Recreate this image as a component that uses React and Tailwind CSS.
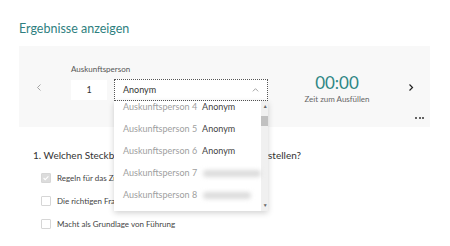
import React from 'react';

const font = { fontFamily: 'Lato, "Open Sans", sans-serif' };

const rows = [
    { n: 4, name: 'Anonym' },
    { n: 5, name: 'Anonym' },
    { n: 6, name: 'Anonym' },
    { n: 7, blur: 'w-[58px]' },
    { n: 8, blur: 'w-[48px]' },
];

const answers = [
    { label: 'Regeln für das Zusammenarbeiten im Team', checked: true },
    { label: 'Die richtigen Fragen im Gespräch stellen' },
    { label: 'Macht als Grundlage von Führung' },
];

function Chevron({ dir, className, strokeWidth = 1 }) {
    const d = dir === 'left' ? 'M6 1 L2 5 L6 9' : dir === 'right' ? 'M2 1 L6 5 L2 9' : 'M1 5 L5 1 L9 5';
    return (
        <svg viewBox={dir === 'up' ? '0 0 10 6' : '0 0 8 10'} className={className} fill="none" stroke="currentColor" strokeWidth={strokeWidth}>
            <path d={d} />
        </svg>
    );
}

export default function App() {
    return (
        <div className="w-[450px] h-[246px] bg-white overflow-hidden relative" style={font}>
            <h1 className="pl-[19px] pt-[21px] text-[12.5px] leading-[16px] text-[#2f7f80]">Ergebnisse anzeigen</h1>

            {/* Panel */}
            <div className="ml-[19px] mt-[9px] w-[411px] h-[81px] bg-[#f8f8f8] relative flex items-start">
                <div className="pl-[17px] pt-[37px] text-[#8a8a8a]">
                    <Chevron dir="left" className="w-[6px] h-[9px]" />
                </div>
                <div className="ml-[29px] pt-[18px]">
                    <div className="text-[8px] leading-[10px] text-[#555]">Auskunftsperson</div>
                    <div className="flex items-start mt-[5px]">
                        <div className="w-[36px] h-[20px] mt-[1px] bg-white flex items-center justify-center text-[9px] text-[#333]">1</div>
                        <div className="relative ml-[7px]">
                            <div className="w-[154px] h-[22px] bg-white border border-dotted border-[#555] flex items-center justify-between pl-[8px] pr-[8px]">
                                <span className="text-[9px] text-[#333]">Anonym</span>
                                <Chevron dir="up" className="w-[7px] h-[4px] text-[#777]" />
                            </div>
                            {/* Dropdown list */}
                            <div className="absolute left-0 top-[22px] w-[154px] h-[110px] bg-white overflow-hidden shadow-[0_2px_6px_rgba(0,0,0,0.18)] z-10 flex">
                                <div className="flex-1 -mt-[5px]">
                                    {rows.map((r) => (
                                        <div key={r.n} className="h-[22px] flex items-center pl-[9px] text-[9px] whitespace-nowrap">
                                            <span className="text-[#a0a0a0]">Auskunftsperson {r.n}</span>
                                            {r.name ? (
                                                <span className="ml-[5px] text-[#444]">{r.name}</span>
                                            ) : (
                                                <span className={`ml-[6px] shrink-0 h-[7px] rounded-full bg-[#dcdcdc] blur-[2px] ${r.blur}`} />
                                            )}
                                        </div>
                                    ))}
                                </div>
                                <div className="w-[8px] mr-[1px] bg-[#f0f0f0] flex flex-col items-center">
                                    <div className="mt-[2px] text-[#666] text-[5px] leading-[6px]">▲</div>
                                    <div className="mt-[7px] w-[8px] h-[10px] bg-[#c1c1c1]" />
                                    <div className="mt-auto mb-[3px] text-[#666] text-[5px] leading-[6px]">▼</div>
                                </div>
                            </div>
                        </div>
                    </div>
                </div>
                <div className="ml-[29px] pt-[28px] flex flex-col items-center w-[80px]">
                    <div className="text-[17px] leading-[18px] text-[#2e8784]">00:00</div>
                    <div className="mt-[2px] text-[8px] leading-[10px] text-[#666]">Zeit zum Ausfüllen</div>
                </div>
                <div className="ml-[31px] pt-[37px] text-[#222]">
                    <Chevron dir="right" className="w-[6px] h-[9px]" strokeWidth={1.6} />
                </div>
                <div className="absolute right-[6px] bottom-[8px] flex gap-[1.5px]">
                    <span className="w-[2px] h-[2px] bg-[#333] rounded-full" />
                    <span className="w-[2px] h-[2px] bg-[#333] rounded-full" />
                    <span className="w-[2px] h-[2px] bg-[#333] rounded-full" />
                </div>
            </div>

            {/* Question */}
            <div className="pl-[33px] pt-[21px]">
                <div className="text-[10px] leading-[14px] text-[#333] whitespace-nowrap">1. Welchen Steckbrief möchten Sie gern als Erstes vorstellen?</div>
                <div className="mt-[11px] pl-[8px] flex flex-col gap-[13px]">
                    {answers.map((a) => (
                        <div key={a.label} className="flex items-center gap-[6px]">
                            <div className={`w-[10px] h-[10px] border border-[#d6d6d6] rounded-[1px] flex items-center justify-center ${a.checked ? 'bg-[#dcdcdc]' : 'bg-white'}`}>
                                {a.checked && (
                                    <svg viewBox="0 0 10 10" className="w-[8px] h-[8px]" fill="none" stroke="#fff" strokeWidth="1.4">
                                        <path d="M2 5 L4 7 L8 3" />
                                    </svg>
                                )}
                            </div>
                            <span className="text-[8px] leading-[10px] text-[#444]">{a.label}</span>
                        </div>
                    ))}
                </div>
            </div>
        </div>
    );
}
